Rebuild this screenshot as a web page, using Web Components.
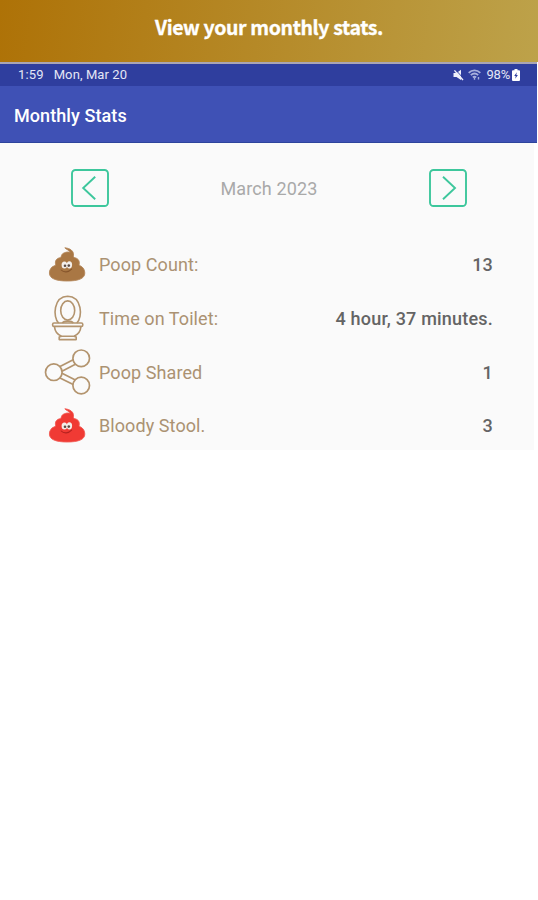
<!DOCTYPE html>
<html lang="en">
<head>
<meta charset="utf-8">
<title>Monthly Stats</title>
<style>
  body {
    margin: 0;
    background: #fff;
    font-family: Roboto, "Liberation Sans", sans-serif;
  }
</style>
</head>
<body>

<promo-banner>View your monthly stats.</promo-banner>
<app-screen>
  <status-bar slot="status" time="1:59" date="Mon, Mar 20" battery="98%"></status-bar>
  <app-bar slot="bar">Monthly Stats</app-bar>
  <month-picker>March 2023</month-picker>
  <stat-row icon="poop" value="13">Poop Count:</stat-row>
  <stat-row icon="toilet" value="4 hour, 37 minutes.">Time on Toilet:</stat-row>
  <stat-row icon="share" value="1">Poop Shared</stat-row>
  <stat-row icon="blood" value="3">Bloody Stool.</stat-row>
</app-screen>

<script>
// Shared pile drawing, only the colours change
const pile = (fill, edge, mouth) => `
  <path d="M20.8 9.8C22.4 11.8 25.4 12.2 26.2 14.2C24 13.6 20.5 14.2 18.8 15.6C17.4 16.8 17.2 18.4 16.8 19.6C13.6 19.8 11.2 22 11.4 25C11.5 26.5 11.8 27 10.8 27.6C7.6 28.6 5.4 31.4 5.4 35C5.4 40.6 12 43 23.2 43C34.4 43 40.8 40.6 40.8 35C40.8 31.4 38.8 28.8 35.8 27.6C34.8 27.2 35.2 26.5 35.3 25C35.5 22 33.4 20.2 30.4 19.6C29.4 19.2 29.4 18.4 29.5 17.2C30 13 26 10.2 20.8 9.8Z"
    fill="${fill}" stroke="${edge}" stroke-width=".9" stroke-linejoin="round"/>
  <ellipse cx="20.4" cy="27" rx="2.8" ry="3.6" fill="#f3eeea"/>
  <ellipse cx="25.4" cy="26.8" rx="2.7" ry="3.6" fill="#f3eeea"/>
  <circle cx="21" cy="27.8" r="1.3" fill="#5a4a43"/>
  <circle cx="24.8" cy="27.6" r="1.3" fill="#5a4a43"/>
  <path d="M17.2 32C19.6 34.6 24.5 34.6 27.6 31.2" fill="none" stroke="${mouth}" stroke-width="1.1" stroke-linecap="round"/>`;

const ICONS = {
  poop: pile('#a97744', '#b4885c', '#87562c'),
  blood: pile('#f03a34', '#f25b55', '#b5221f'),
  toilet: `
    <g fill="none" stroke="#b3946e" stroke-width="1.6" stroke-linejoin="round">
      <path d="M14.6 31C8.5 25 9.5 4.6 23.7 4.3C38 4.6 39 25 32.8 31"/>
      <ellipse cx="23.7" cy="18.5" rx="7" ry="9.6"/>
      <path d="M18.3 31C20 28.5 27.6 28.5 29.3 31"/>
      <rect x="8.6" y="31" width="30.2" height="3.4" rx="1.4"/>
      <path d="M10.4 34.4C11 40 14 43 17.6 44.2H29.9C33.5 43 36.4 40 37 34.4"/>
      <path d="M17.6 44.2L15.2 45V47.6H32.2V45L29.9 44.2"/>
    </g>`,
  share: `
    <g fill="none" stroke="#b3946e" stroke-width="1.7">
      <circle cx="9.8" cy="26.2" r="8.3"/>
      <circle cx="37.2" cy="12.3" r="8.3"/>
      <circle cx="37.2" cy="39.5" r="8.3"/>
      <path d="M16 20.5L29.2 13.7M18 25.2L31.4 18.3M18 27.3L31.4 34M16 32L29.2 38.6"/>
    </g>`
};

class PromoBanner extends HTMLElement {
  constructor() {
    super();
    this.attachShadow({ mode: 'open' }).innerHTML = `
      <style>
        :host {
          display: block;
          box-sizing: border-box;
          height: 62px;
          padding-top: 12px;
          background: linear-gradient(97deg, #ae7207, #bda24a);
          color: #fff;
          font: 700 19.5px/29px "Noto Sans CJK KR", "Noto Sans", sans-serif;
          text-align: center;
          letter-spacing: -0.38px;
          -webkit-text-stroke: 0.3px #fff;
        }
      </style>
      <slot></slot>`;
  }
}

class AppScreen extends HTMLElement {
  constructor() {
    super();
    this.attachShadow({ mode: 'open' }).innerHTML = `
      <style>
        :host { display: block; }
        .top {
          margin-right: 1px;
          border-top: 2px solid #aaa5b4;
        }
        .content {
          box-sizing: border-box;
          height: 307px;
          margin-right: 4px;
          padding-top: 26px;
          background: #fafafa;
        }
      </style>
      <div class="top">
        <slot name="status"></slot>
        <slot name="bar"></slot>
      </div>
      <div class="content"><slot></slot></div>`;
  }
}

class StatusBar extends HTMLElement {
  constructor() {
    super();
    this.attachShadow({ mode: 'open' });
  }

  connectedCallback() {
    this.shadowRoot.innerHTML = `
      <style>
        :host {
          display: flex;
          align-items: center;
          height: 22px;
          padding: 0 17px 0 18px;
          background: #2f3e9e;
          color: #e4e6f5;
          font-size: 13px;
          line-height: 22px;
        }
        .time { letter-spacing: 0.15px; }
        .date { margin-left: 10px; flex: 1; letter-spacing: 0.1px; }
        .battery { margin-left: 5px; letter-spacing: -0.2px; }
        svg { display: block; }
        .wifi { margin-left: 4px; }
        .cell { margin-left: 2px; }
      </style>
      <span class="time">${this.getAttribute('time')}</span>
      <span class="date">${this.getAttribute('date')}</span>
      <svg width="11" height="12" viewBox="0 0 11 12">
        <path d="M.5 4H3.5L8 .8V11L3.5 8H.5Z" fill="#eef0fb"/>
        <path d="M2 .2L10.6 9.6" stroke="#2f3e9e" stroke-width="1"/>
        <path d="M1.4 1.4L10 11" stroke="#eef0fb" stroke-width="1.4"/>
      </svg>
      <svg class="wifi" width="13" height="12" viewBox="0 0 13 12" fill="none" stroke="#a9b1dc" stroke-width="1.8">
        <path d="M.7 3.8C4 .6 9 .6 12.3 3.8M2.8 6.2C5 4.2 8 4.2 10.2 6.2M4.8 8.4C6 7.5 7 7.5 8.2 8.4"/>
        <path d="M6.5 8.6V10.8M10.5 8V10.6" stroke-width="1.4"/>
      </svg>
      <span class="battery">${this.getAttribute('battery')}</span>
      <svg class="cell" width="8" height="12" viewBox="0 0 8 12">
        <path d="M2.5 0H5.5V1.3H7Q8 1.3 8 2.3V11Q8 12 7 12H1Q0 12 0 11V2.3Q0 1.3 1 1.3H2.5Z" fill="#fff"/>
        <path d="M4.8 3.2L2.2 7H3.7L3.2 9.8L5.9 6H4.3Z" fill="#2f3e9e"/>
      </svg>`;
  }
}

class AppBar extends HTMLElement {
  constructor() {
    super();
    this.attachShadow({ mode: 'open' }).innerHTML = `
      <style>
        :host {
          display: flex;
          align-items: center;
          box-sizing: border-box;
          height: 57px;
          padding: 2px 14px 0;
          border-bottom: 1px solid #2d449c;
          background: #3f51b5;
          color: #fff;
          font-size: 18px;
          font-weight: 500;
          letter-spacing: 0.08px;
        }
      </style>
      <slot></slot>`;
  }
}

class MonthPicker extends HTMLElement {
  constructor() {
    super();
    this.attachShadow({ mode: 'open' }).innerHTML = `
      <style>
        :host {
          display: flex;
          align-items: center;
          justify-content: space-between;
          height: 38px;
          margin-bottom: 30.6px;
          padding: 0 67px 0 71px;
          color: #a9a9a9;
          font-size: 18px;
          letter-spacing: 0.15px;
        }
        button {
          padding: 0;
          border: 0;
          background: none;
        }
        svg {
          display: block;
          fill: none;
          stroke: #3dc79c;
          stroke-width: 1.9;
        }
      </style>
      <button aria-label="Previous month">
        <svg width="38" height="38" viewBox="0 0 38 38">
          <rect x="1" y="1" width="36" height="36" rx="3.5"/>
          <path d="M24.2 7.8L12.2 19L24.2 30.2"/>
        </svg>
      </button>
      <slot></slot>
      <button aria-label="Next month">
        <svg width="38" height="38" viewBox="0 0 38 38">
          <rect x="1" y="1" width="36" height="36" rx="3.5"/>
          <path d="M14 7.8L26 19L14 30.2"/>
        </svg>
      </button>`;
  }
}

class StatRow extends HTMLElement {
  constructor() {
    super();
    this.attachShadow({ mode: 'open' });
  }

  connectedCallback() {
    this.shadowRoot.innerHTML = `
      <style>
        :host {
          display: flex;
          align-items: center;
          height: 53.8px;
          padding: 0 41px 0 44px;
          color: #ab9272;
          font-size: 18px;
          letter-spacing: 0.08px;
        }
        svg { flex: none; margin-right: 7px; }
        .label { flex: 1; }
        .value {
          color: #646464;
          font-weight: 500;
          letter-spacing: 0.2px;
        }
      </style>
      <svg width="48" height="53" viewBox="0 0 48 53">${ICONS[this.getAttribute('icon')]}</svg>
      <span class="label"><slot></slot></span>
      <span class="value">${this.getAttribute('value')}</span>`;
  }
}

customElements.define('promo-banner', PromoBanner);
customElements.define('app-screen', AppScreen);
customElements.define('status-bar', StatusBar);
customElements.define('app-bar', AppBar);
customElements.define('month-picker', MonthPicker);
customElements.define('stat-row', StatRow);
</script>
</body>
</html>
